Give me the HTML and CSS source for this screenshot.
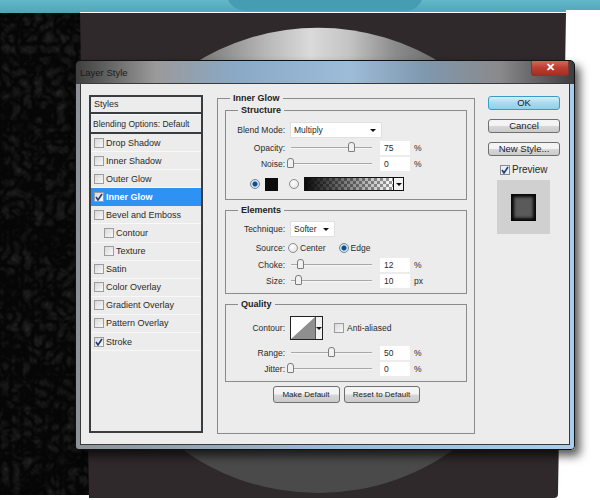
FILE: index.html
```html
<!DOCTYPE html>
<html lang="en">
<head>
  <meta charset="UTF-8">
  <title>Layer Style</title>
  <link rel="stylesheet" href="styles.css">
</head>
<body>
  <svg class="backdrop" width="600" height="500" viewBox="0 0 600 500">
    <defs>
      <linearGradient id="teal" x1="0" y1="0" x2="0" y2="1">
        <stop offset="0" stop-color="#62b7c8"/>
        <stop offset="1" stop-color="#4fa6b8"/>
      </linearGradient>
      <linearGradient id="silver" x1="0" y1="0" x2="1" y2="0">
        <stop offset="0" stop-color="#6f6f6f"/>
        <stop offset="0.3" stop-color="#b8b8b8"/>
        <stop offset="0.47" stop-color="#dadada"/>
        <stop offset="0.62" stop-color="#c4c4c4"/>
        <stop offset="0.8" stop-color="#8c8c8c"/>
        <stop offset="1" stop-color="#666"/>
      </linearGradient>
      <filter id="leather" x="0" y="0" width="100%" height="100%" color-interpolation-filters="sRGB">
        <feTurbulence type="turbulence" baseFrequency="0.09" numOctaves="2" seed="4"/>
        <feColorMatrix values="0 0 0 0 0.14  0 0 0 0 0.14  0 0 0 0 0.14  1.6 0 0 0 -0.25"/>
      </filter>
    </defs>
    <rect width="600" height="500" fill="#fff"/>
    <path d="M0 13H80V12H566V10H600V0H0Z" fill="url(#teal)"/>
    <path d="M228 0C232 8 240 11 248 11H404C412 11 418 8 422 0Z" fill="#469cb0"/>
    <rect x="0" y="13" width="92" height="482" fill="#060606"/>
    <rect x="0" y="13" width="92" height="482" filter="url(#leather)"/>
    <path d="M80 13H566L558 494Q558 498 554 498H89Z" fill="#2f292c"/>
    <path d="M190 66A233 233 0 0 1 446 66V300H190Z" fill="url(#silver)"/>
    <path d="M170 440A233 233 0 0 0 466 440Z" fill="#4a4a4a"/>
  </svg>

  <div class="window">
    <div class="titlebar">
      <span class="title">Layer Style</span>
      <span class="close">&#10005;</span>
    </div>

    <div class="client">
      <div class="styles-list">
        <div class="list-head">Styles</div>
        <div class="list-blend">Blending Options: Default</div>
        <div class="list-item"><span class="check"></span>Drop Shadow</div>
        <div class="list-item"><span class="check"></span>Inner Shadow</div>
        <div class="list-item"><span class="check"></span>Outer Glow</div>
        <div class="list-item selected">
          <span class="check"><svg width="8" height="8" viewBox="0 0 8 8"><path d="M1 4l2 3 4-6"/></svg></span>Inner Glow
        </div>
        <div class="list-item"><span class="check"></span>Bevel and Emboss</div>
        <div class="list-item nested"><span class="check"></span>Contour</div>
        <div class="list-item nested"><span class="check"></span>Texture</div>
        <div class="list-item"><span class="check"></span>Satin</div>
        <div class="list-item"><span class="check"></span>Color Overlay</div>
        <div class="list-item"><span class="check"></span>Gradient Overlay</div>
        <div class="list-item"><span class="check"></span>Pattern Overlay</div>
        <div class="list-item">
          <span class="check"><svg width="8" height="8" viewBox="0 0 8 8"><path d="M1 4l2 3 4-6"/></svg></span>Stroke
        </div>
      </div>

      <fieldset class="group outer">
        <legend class="legend-outer">Inner Glow</legend>

        <fieldset class="group structure">
          <legend>Structure</legend>
          <div class="row">
            <label>Blend Mode:</label>
            <div class="select blend-select">Multiply<span class="caret"></span></div>
          </div>
          <div class="row row-opacity">
            <label>Opacity:</label>
            <div class="slider"><span class="thumb" style="left: 75%"></span></div>
            <div class="field">75</div><span class="unit">%</span>
          </div>
          <div class="row row-noise">
            <label>Noise:</label>
            <div class="slider"><span class="thumb" style="left: 0%"></span></div>
            <div class="field">0</div><span class="unit">%</span>
          </div>
          <div class="row row-color">
            <span class="radio on"></span>
            <span class="swatch"></span>
            <span class="radio"></span>
            <div class="gradient">
              <span class="gradient-bar"></span>
              <span class="gradient-arrow"><span class="caret"></span></span>
            </div>
          </div>
        </fieldset>

        <fieldset class="group elements">
          <legend>Elements</legend>
          <div class="row">
            <label>Technique:</label>
            <div class="select technique-select">Softer<span class="caret"></span></div>
          </div>
          <div class="row row-source">
            <label>Source:</label>
            <span class="radio"></span><span class="radio-text">Center</span>
            <span class="radio on"></span><span class="radio-text">Edge</span>
          </div>
          <div class="row row-choke">
            <label>Choke:</label>
            <div class="slider"><span class="thumb" style="left: 12%"></span></div>
            <div class="field">12</div><span class="unit">%</span>
          </div>
          <div class="row row-size">
            <label>Size:</label>
            <div class="slider"><span class="thumb" style="left: 10%"></span></div>
            <div class="field">10</div><span class="unit">px</span>
          </div>
        </fieldset>

        <fieldset class="group quality">
          <legend>Quality</legend>
          <div class="row">
            <label>Contour:</label>
            <div class="contour">
              <svg width="24" height="22" viewBox="0 0 24 22"><path d="M0 22L24 0V22Z" fill="#8f8f8f"/></svg>
              <span class="contour-arrow"><span class="caret"></span></span>
            </div>
            <span class="check anti"></span><span class="anti-text">Anti-aliased</span>
          </div>
          <div class="row row-range">
            <label>Range:</label>
            <div class="slider"><span class="thumb" style="left: 50%"></span></div>
            <div class="field">50</div><span class="unit">%</span>
          </div>
          <div class="row row-jitter">
            <label>Jitter:</label>
            <div class="slider"><span class="thumb" style="left: 0%"></span></div>
            <div class="field">0</div><span class="unit">%</span>
          </div>
        </fieldset>

        <div class="defaults">
          <button class="make">Make Default</button>
          <button class="reset">Reset to Default</button>
        </div>
      </fieldset>

      <div class="side">
        <button class="primary">OK</button>
        <button>Cancel</button>
        <button>New Style...</button>
        <div class="preview-check">
          <span class="check"><svg width="8" height="8" viewBox="0 0 8 8"><path d="M1 4l2 3 4-6"/></svg></span>Preview
        </div>
        <div class="preview"><span class="preview-inner"></span></div>
      </div>
    </div>
  </div>
</body>
</html>
```

FILE: styles.css
```css
body {
  margin: 0;
  width: 600px;
  height: 500px;
  overflow: hidden;
  position: relative;
  background: #fff;
  font-family: "Liberation Sans", Arial, sans-serif;
  font-size: 9px;
  color: #2a2a2a;
}

.backdrop {
  position: absolute;
  left: 0;
  top: 0;
}

/* window */
.window {
  position: absolute;
  left: 75px;
  top: 60px;
  width: 500px;
  height: 390px;
  box-sizing: border-box;
  display: flex;
  flex-direction: column;
  padding: 0 4px 4px;
  border: 1px solid #111;
  border-radius: 5px 5px 4px 4px;
  background: linear-gradient(to right, #3e3e3e 0%, #9a9a9a 16%, #8aa9c6 32%, #9dbcd8 55%, #7f98ae 70%, #8a8a8c 85%, #3d3d3f 100%);
  box-shadow: 5px 6px 10px rgba(0, 0, 0, 0.65);
}

.window::after {
  content: "";
  position: absolute;
  left: 0;
  right: 0;
  top: 23px;
  bottom: 0;
  border-radius: 0 0 3px 3px;
  background: linear-gradient(to right, #8d9298, #9bbad6 50%, #a9cdea);
  z-index: 0;
}

.titlebar {
  height: 22px;
  flex: none;
  display: flex;
  align-items: flex-start;
  justify-content: space-between;
  position: relative;
  z-index: 1;
}

.title {
  font-size: 9.5px;
  margin-top: 6px;
  color: #1b1b1b;
}

.close {
  width: 38px;
  height: 15px;
  margin: 0 1px 0 0;
  box-sizing: border-box;
  border: 1px solid #7b3a33;
  border-top: 0;
  border-radius: 0 0 3px 3px;
  background: linear-gradient(#d0695b, #bb3d2f 50%, #a52f22);
  color: #fff;
  font-size: 11px;
  font-weight: bold;
  line-height: 13px;
  text-align: center;
}

.client {
  flex: 1;
  display: flex;
  align-items: stretch;
  gap: 13px;
  padding: 9px 9px 10px 8px;
  background: #ececec;
  border: 1px solid #3a3a3a;
  position: relative;
  z-index: 1;
}

/* left list */
.styles-list {
  width: 114px;
  flex: none;
  margin: 2px 1px 1px 0;
  box-sizing: border-box;
  border: 2px solid #3a3d40;
  background: #ececec;
}

.list-head {
  height: 15px;
  line-height: 15px;
  padding-left: 3px;
  border-bottom: 2px solid #3a3d40;
}

.list-blend {
  height: 17px;
  line-height: 19px;
  padding-left: 2px;
  font-size: 8.5px;
  white-space: nowrap;
  border-top: 1px solid #f8f8f8;
  border-bottom: 2px solid #3a3d40;
}

.list-item {
  height: 18.1px;
  box-sizing: border-box;
  display: flex;
  align-items: center;
  gap: 2px;
  padding-left: 3px;
  border-bottom: 1px solid #f8f8f8;
}

.list-item.nested {
  padding-left: 13px;
}

.list-item.selected {
  background: #2e91f4;
  border-bottom-color: #2e91f4;
  color: #fff;
  font-weight: bold;
}

.check {
  width: 10px;
  height: 10px;
  flex: none;
  box-sizing: border-box;
  display: inline-flex;
  align-items: center;
  justify-content: center;
  border: 1px solid #9c9c9c;
  background: linear-gradient(135deg, #d9d9d9, #f8f8f8);
}

.check svg {
  fill: none;
  stroke: #1f3c78;
  stroke-width: 1.6;
}

/* settings groups */
.group {
  margin: 0;
  padding: 0;
  min-width: 0;
  border: 1px solid #8b8b8b;
}

.group legend {
  margin-left: 12px;
  padding: 0 3px;
  font-weight: bold;
  line-height: 10px;
  color: #222;
}

.outer {
  width: 258px;
  flex: none;
  box-sizing: border-box;
  padding: 2px 7px 0;
}

.outer > .legend-outer {
  margin-left: 5px;
}

.structure {
  padding: 7px 0 8px;
}

.elements {
  margin-top: 5px;
  padding: 6px 0 5px;
}

.quality {
  margin-top: 5px;
  padding: 7px 0 5px;
}

.row {
  display: flex;
  align-items: center;
  min-height: 14px;
  font-size: 8.5px;
}

.row label {
  width: 59px;
  margin-right: 5px;
  flex: none;
  text-align: right;
}

.row-opacity { margin-top: 3px; }
.row-noise { margin-top: 2px; }
.row-color { margin-top: 6px; padding-left: 24px; }
.row-source { margin-top: 4px; }
.row-choke { margin-top: 3px; }
.row-size { margin-top: 2px; }
.row-range { margin-top: 6px; }
.row-jitter { margin-top: 2px; }

.select {
  height: 16px;
  box-sizing: border-box;
  display: flex;
  align-items: center;
  justify-content: space-between;
  padding: 0 5px 0 3px;
  background: #fff;
  border: 1px solid #e0e0e0;
}

.blend-select { width: 92px; }
.technique-select { width: 45px; }

.caret {
  width: 0;
  height: 0;
  border-left: 3px solid transparent;
  border-right: 3px solid transparent;
  border-top: 3px solid #111;
}

.slider {
  width: 81px;
  height: 1px;
  margin: 0 8px 0 1px;
  position: relative;
  background: #a8a8a8;
  border-bottom: 1px solid #f6f6f6;
}

.thumb {
  position: absolute;
  top: -5px;
  width: 7px;
  height: 10px;
  margin-left: -4px;
  box-sizing: border-box;
  border: 1px solid #7c7c7c;
  border-radius: 3px 3px 1px 1px;
  background: #f1f1f1;
}

.field {
  width: 30px;
  height: 14px;
  box-sizing: border-box;
  padding-left: 4px;
  line-height: 14px;
  background: #fff;
}

.unit {
  margin-left: 4px;
}

/* color row */
.radio {
  width: 10px;
  height: 10px;
  flex: none;
  box-sizing: border-box;
  display: inline-block;
  border-radius: 50%;
  border: 1px solid #8c8c8c;
  background: radial-gradient(circle at 40% 35%, #fff, #ddd);
}

.radio.on {
  background: radial-gradient(circle, #0f4f86 0 2px, #cfe4f5 3px);
  border-color: #6f8799;
}

.swatch {
  width: 13px;
  height: 13px;
  margin: 0 11px 0 5px;
  background: #0b0b0b;
}

.gradient {
  width: 100px;
  height: 14px;
  margin-left: 5px;
  box-sizing: border-box;
  display: flex;
  border: 1px solid #111;
}

.gradient-bar {
  flex: 1;
  background:
    linear-gradient(to right, #0a0a0a, rgba(10, 10, 10, 0)),
    repeating-conic-gradient(#9d9d9d 0 25%, #fff 0 50%) 0 0 / 6px 6px;
}

.gradient-arrow {
  width: 9px;
  display: flex;
  align-items: center;
  justify-content: center;
  background: #f2f2f2;
  border-left: 1px solid #111;
}

/* source row */
.row-source .radio:first-of-type {
  margin-left: -2px;
}

.radio-text {
  margin: 0 13px 0 2px;
}

/* contour */
.contour {
  width: 33px;
  height: 24px;
  box-sizing: border-box;
  display: flex;
  border: 1px solid #222;
  background: #fff;
}

.contour svg {
  display: block;
}

.contour-arrow {
  flex: 1;
  display: flex;
  align-items: center;
  justify-content: center;
  background: #f2f2f2;
  border-left: 1px solid #555;
}

.anti {
  margin-left: 11px;
}

.anti-text {
  margin-left: 3px;
}

/* buttons */
button {
  margin: 0;
  padding: 0;
  font: inherit;
  color: #222;
  border: 1px solid #6f6f6f;
  border-radius: 3px;
  background: linear-gradient(#f4f4f4 45%, #d6d6d6 55%, #cbcbcb);
}

.defaults {
  display: flex;
  justify-content: center;
  gap: 4px;
  margin-top: 4px;
}

.defaults button {
  height: 17px;
  font-size: 8px;
}

.make { width: 67px; }
.reset { width: 76px; }

.side {
  width: 72px;
  flex: none;
  margin-top: 3px;
  display: flex;
  flex-direction: column;
}

.side button {
  height: 14px;
  margin-bottom: 9px;
  font-size: 9.5px;
  line-height: 12px;
}

.side .primary {
  border-color: #3a9bc4;
  background: linear-gradient(#d6effa, #a8daf0 50%, #8fcfec);
}

.preview-check {
  display: flex;
  align-items: center;
  gap: 2px;
  margin: -1px 0 0 12px;
  font-size: 10px;
  height: 11px;
}

.preview-check .check {
  border-color: #8a8a8a;
  background: #e8eefa;
}

.preview {
  width: 53px;
  height: 54px;
  margin: 5px 0 0 9px;
  display: flex;
  align-items: center;
  justify-content: center;
  background: #d0d0d0;
}

.preview-inner {
  width: 25px;
  height: 27px;
  box-sizing: border-box;
  background: #5a5a5a;
  box-shadow: inset 0 0 3px 3px #070707;
}
```
